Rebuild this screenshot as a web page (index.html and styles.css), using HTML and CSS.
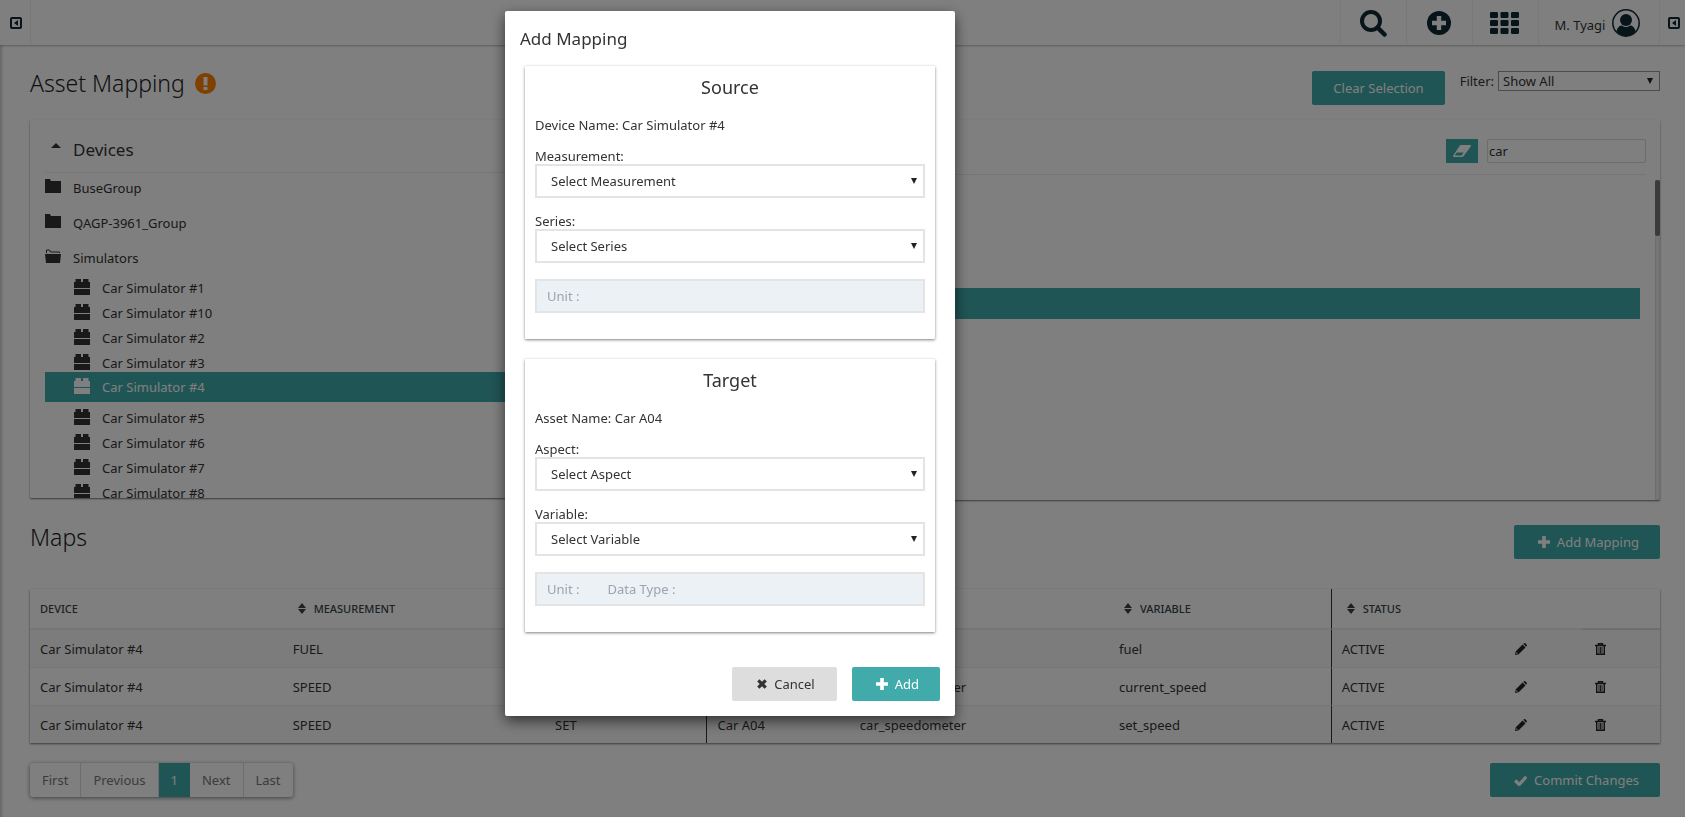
FILE: index.html
```html
<!DOCTYPE html>
<html lang="en">
<head>
<meta charset="utf-8">
<title>Asset Mapping</title>
<link rel="stylesheet" href="styles.css">
</head>
<body>
<svg class="defs" aria-hidden="true">
  <symbol id="collapse" viewBox="0 0 12 12"><rect x="1" y="1" width="10" height="10" rx="1" fill="none" stroke="currentColor" stroke-width="2"/><path d="M8 3v6L4 6z" fill="currentColor"/></symbol>
  <symbol id="folder" viewBox="0 0 16 14"><path d="M0 0h5l1 2h10v12H0z" fill="currentColor"/></symbol>
  <symbol id="folder-open" viewBox="0 0 16 14"><path d="M1.500 4V1h3l1 2h9v1" fill="none" stroke="currentColor"/><path d="M0 5h16l-1 9H1z" fill="currentColor"/></symbol>
  <symbol id="brick" viewBox="0 0 16 16"><path d="M0 9V3h1.500V0H7v3h2V0h5.500v3H16v6zM0 10h16v6H0z" fill="currentColor"/></symbol>
  <symbol id="sort" viewBox="0 0 8 11"><path d="M0 5l4-5 4 5zM0 6h8l-4 5z" fill="currentColor"/></symbol>
  <symbol id="plus" viewBox="0 0 12 12"><path d="M4.200 0h3.600v4.200H12v3.600H7.800V12H4.200V7.800H0V4.200h4.200z" fill="currentColor"/></symbol>
  <symbol id="check" viewBox="0 0 13 11"><path d="M1.200 5.500l4 4 7-7.700" fill="none" stroke="currentColor" stroke-width="3.200"/></symbol>
  <symbol id="cross" viewBox="0 0 10 10"><path d="M1.300 1.300l7.400 7.400M8.700 1.300L1.300 8.700" stroke="currentColor" stroke-width="3.200"/></symbol>
  <symbol id="pencil" viewBox="0 0 12 12"><path fill-rule="evenodd" d="M0 12l.8-3.700L7.600 1.500l2.900 2.900-6.800 6.800zM1.600 9.100l-.4 1.700 1.700-.4zM8.300.8L9.100.2Q9.700-.2 10.300.3l1.400 1.400q.5.600 0 1.200l-.7.800z" fill="currentColor"/></symbol>
  <symbol id="trash" viewBox="0 0 11 12"><path d="M3.500 2V.7h4V2M0 2.500h11M1.700 3v8.300h7.600V3" fill="none" stroke="currentColor" stroke-width="1.400"/><path d="M4 4v6.500M5.500 4v6.500M7 4v6.500" stroke="currentColor" stroke-width=".9"/></symbol>
</svg>

<header class="topbar">
  <button class="bar-cell bar-edge" aria-label="Expand left panel"><svg width="12" height="12"><use href="#collapse"/></svg></button>
  <span class="bar-space"></span>
  <button class="bar-cell bar-tool" aria-label="Search"><svg width="28" height="28" viewBox="0 0 28 28"><circle cx="12" cy="12" r="9" fill="none" stroke="currentColor" stroke-width="4"/><path d="M18.500 18.500l7 7" stroke="currentColor" stroke-width="4.500" stroke-linecap="round"/></svg></button>
  <button class="bar-cell bar-tool" aria-label="Add"><svg width="24" height="24" viewBox="0 0 24 24"><circle cx="12" cy="12" r="12" fill="currentColor"/><path d="M12 5v14M5 12h14" stroke="#fff" stroke-width="4.400"/></svg></button>
  <button class="bar-cell bar-tool" aria-label="Apps"><svg width="29" height="22" viewBox="0 0 29 22" fill="currentColor"><rect width="8" height="6" rx="1.200"/><rect x="10.500" width="8" height="6" rx="1.200"/><rect x="21" width="8" height="6" rx="1.200"/><rect y="8" width="8" height="6" rx="1.200"/><rect x="10.500" y="8" width="8" height="6" rx="1.200"/><rect x="21" y="8" width="8" height="6" rx="1.200"/><rect y="16" width="8" height="6" rx="1.200"/><rect x="10.500" y="16" width="8" height="6" rx="1.200"/><rect x="21" y="16" width="8" height="6" rx="1.200"/></svg></button>
  <button class="bar-cell bar-user"><span class="user-name">M. Tyagi</span><svg width="28" height="28" viewBox="0 0 28 28"><circle cx="14" cy="14" r="13.200" fill="none" stroke="currentColor" stroke-width="1.500"/><circle cx="14" cy="11" r="6" fill="currentColor"/><path d="M4.500 22Q6 16.500 10 16.500q4 3 8 0 4 0 5.500 5.500Q20 27 14 27T4.500 22z" fill="currentColor"/></svg></button>
  <button class="bar-cell bar-edge" aria-label="Expand right panel"><svg width="12" height="12"><use href="#collapse"/></svg></button>
</header>

<main class="page">
  <div class="page-head">
    <h1 class="heading">Asset Mapping</h1>
    <svg class="warn" width="21" height="21" viewBox="0 0 21 21"><circle cx="10.500" cy="10.500" r="10.500" fill="#ff8000"/><path d="M8.500 4h4v8.500h-4zM8.500 14h4v3h-4z" fill="#fff"/></svg>
    <span class="push"></span>
    <button class="btn">Clear Selection</button>
    <label class="filter">Filter:<span class="pick pick-small"><select><option>Show All</option></select></span></label>
  </div>

  <div class="panels">
    <section class="panel devices">
      <h2 class="panel-title"><svg width="10" height="5" viewBox="0 0 10 5"><path d="M0 5l5-5 5 5z" fill="currentColor"/></svg>Devices</h2>
      <ul class="tree">
        <li class="group"><svg width="16" height="14"><use href="#folder"/></svg>BuseGroup</li>
        <li class="group"><svg width="16" height="14"><use href="#folder"/></svg>QAGP-3961_Group</li>
        <li class="group"><svg width="16" height="14"><use href="#folder-open"/></svg>Simulators</li>
        <li class="leaf"><svg width="16" height="16"><use href="#brick"/></svg>Car Simulator #1</li>
        <li class="leaf"><svg width="16" height="16"><use href="#brick"/></svg>Car Simulator #10</li>
        <li class="leaf"><svg width="16" height="16"><use href="#brick"/></svg>Car Simulator #2</li>
        <li class="leaf"><svg width="16" height="16"><use href="#brick"/></svg>Car Simulator #3</li>
        <li class="leaf selected"><svg width="16" height="16"><use href="#brick"/></svg>Car Simulator #4</li>
        <li class="leaf"><svg width="16" height="16"><use href="#brick"/></svg>Car Simulator #5</li>
        <li class="leaf"><svg width="16" height="16"><use href="#brick"/></svg>Car Simulator #6</li>
        <li class="leaf"><svg width="16" height="16"><use href="#brick"/></svg>Car Simulator #7</li>
        <li class="leaf"><svg width="16" height="16"><use href="#brick"/></svg>Car Simulator #8</li>
      </ul>
    </section>
    <section class="panel assets">
      <div class="asset-tools">
        <button class="erase" aria-label="Clear search"><svg width="18" height="12" viewBox="0 0 18 12"><path fill-rule="evenodd" d="M8 0h9q1.500.3.700 1.500l-7 9.500q-.7 1-1.700 1H1Q-.5 11.700.3 10.500L6.500 1Q7 0 8 0zM3.800 7.500l-2 3h6.700l2.200-3z" fill="currentColor"/></svg></button>
        <input class="search" type="text" value="car" aria-label="Search assets">
      </div>
      <div class="asset-list"><div class="asset-selected"></div><span class="track"><span class="thumb"></span></span></div>
    </section>
  </div>

  <div class="maps-head">
    <h1 class="heading">Maps</h1>
    <button class="btn"><svg width="12" height="12"><use href="#plus"/></svg>Add Mapping</button>
  </div>

  <table class="maps">
    <colgroup><col class="c-device"><col class="c-measure"><col class="c-series"><col class="c-asset"><col class="c-aspect"><col class="c-variable"><col class="c-status"><col class="c-edit"><col class="c-delete"></colgroup>
    <thead>
      <tr><th>DEVICE</th><th><svg width="8" height="11"><use href="#sort"/></svg>MEASUREMENT</th><th><svg width="8" height="11"><use href="#sort"/></svg>SERIES</th><th class="split"><svg width="8" height="11"><use href="#sort"/></svg>ASSET</th><th><svg width="8" height="11"><use href="#sort"/></svg>ASPECT TYPE</th><th><svg width="8" height="11"><use href="#sort"/></svg>VARIABLE</th><th class="split"><svg width="8" height="11"><use href="#sort"/></svg>STATUS</th><th></th><th class="last"></th></tr>
    </thead>
    <tbody>
      <tr><td>Car Simulator #4</td><td>FUEL</td><td>LEVEL</td><td class="split">Car A04</td><td>car_fuel</td><td>fuel</td><td class="split">ACTIVE</td><td><button class="act" aria-label="Edit"><svg width="12" height="12"><use href="#pencil"/></svg></button></td><td><button class="act act-del" aria-label="Delete"><svg width="11" height="12"><use href="#trash"/></svg></button></td></tr>
      <tr><td>Car Simulator #4</td><td>SPEED</td><td>CURRENT</td><td class="split">Car A04</td><td>car_speedometer</td><td>current_speed</td><td class="split">ACTIVE</td><td><button class="act" aria-label="Edit"><svg width="12" height="12"><use href="#pencil"/></svg></button></td><td><button class="act act-del" aria-label="Delete"><svg width="11" height="12"><use href="#trash"/></svg></button></td></tr>
      <tr><td>Car Simulator #4</td><td>SPEED</td><td>SET</td><td class="split">Car A04</td><td>car_speedometer</td><td>set_speed</td><td class="split">ACTIVE</td><td><button class="act" aria-label="Edit"><svg width="12" height="12"><use href="#pencil"/></svg></button></td><td><button class="act act-del" aria-label="Delete"><svg width="11" height="12"><use href="#trash"/></svg></button></td></tr>
    </tbody>
  </table>

  <div class="page-foot">
    <nav class="pager"><button>First</button><button>Previous</button><button class="current">1</button><button>Next</button><button>Last</button></nav>
    <button class="btn"><svg width="13" height="11"><use href="#check"/></svg>Commit Changes</button>
  </div>
</main>

<div class="overlay">
  <div class="modal" role="dialog" aria-labelledby="modal-title">
    <h2 class="modal-title" id="modal-title">Add Mapping</h2>
    <section class="card">
      <h3 class="card-title">Source</h3>
      <p class="card-name">Device Name: Car Simulator #4</p>
      <label class="field">Measurement:<span class="pick"><select><option>Select Measurement</option></select></span></label>
      <label class="field">Series:<span class="pick"><select><option>Select Series</option></select></span></label>
      <div class="info"><span>Unit :</span></div>
    </section>
    <section class="card">
      <h3 class="card-title">Target</h3>
      <p class="card-name">Asset Name: Car A04</p>
      <label class="field">Aspect:<span class="pick"><select><option>Select Aspect</option></select></span></label>
      <label class="field">Variable:<span class="pick"><select><option>Select Variable</option></select></span></label>
      <div class="info"><span>Unit :</span><span>Data Type :</span></div>
    </section>
    <div class="modal-foot">
      <button class="btn btn-plain"><svg width="10" height="10"><use href="#cross"/></svg>Cancel</button>
      <button class="btn"><svg width="12" height="12"><use href="#plus"/></svg>Add</button>
    </div>
  </div>
</div>
</body>
</html>
```

FILE: styles.css
```css
* { box-sizing: border-box; }
body {
  margin: 0;
  background: #fff;
  color: #333;
  font: 13px/20px "Noto Sans", "Open Sans", sans-serif;
  overflow: hidden;
}
h1, h2, h3, p, ul { margin: 0; padding: 0; font-weight: 400; }
button, input, select { font: inherit; color: inherit; }
button { border: 0; padding: 0; background: none; }
svg { display: block; flex: none; }
.defs { position: absolute; width: 0; height: 0; }

.topbar {
  display: flex;
  height: 45px;
  color: #0f2833;
  box-shadow: 0 1px 2px rgba(0, 0, 0, .25);
}
.bar-cell {
  display: flex;
  align-items: center;
  justify-content: center;
  border-left: 1px solid #f0f0f0;
}
.bar-edge { width: 31px; padding-left: 2px; }
.bar-edge:first-child { border-left: 0; border-right: 1px solid #f0f0f0; }
.bar-edge:last-child { width: 26px; }
.bar-tool { width: 66px; padding-right: 2px; }
.bar-user { width: 121px; gap: 7px; padding-right: 3px; }
.user-name { color: #333; padding-top: 5px; }
.bar-space { flex: 1; }

.page {
  padding: 26px 25px 20px 30px;
  box-shadow: inset 3px 0 3px -1px rgba(0, 0, 0, .2);
}
.page-head { display: flex; align-items: flex-start; height: 49px; }
.heading { font-size: 23px; line-height: 24px; font-weight: 300; color: #222; }
.warn { margin: 2px 0 0 10px; }
.push { flex: 1; }
.btn {
  display: flex;
  align-items: center;
  gap: 7px;
  height: 34px;
  padding: 0 21px;
  border-radius: 2px;
  background: #41aaaa;
  color: #fff;
}
.btn svg { margin-left: 3px; }
.btn-plain { padding: 0 22px; background: #ddd; color: #333; }
.filter { display: flex; gap: 4px; margin-left: 15px; }

.pick { display: block; position: relative; }
.pick select {
  display: block;
  width: 100%;
  height: 34px;
  padding: 0 24px 0 14px;
  border: 2px solid #e4e4e4;
  border-radius: 0;
  background: #fff;
  appearance: none;
}
.pick::after {
  content: "";
  position: absolute;
  top: 14px;
  right: 8px;
  width: 6px;
  height: 6px;
  background: #222;
  clip-path: polygon(0 0, 100% 0, 50% 100%);
}
.pick-small { width: 162px; }
.pick-small select { height: 20px; padding: 0 20px 0 4px; border: 1px solid #999; line-height: 18px; }
.pick-small::after { top: 7px; right: 7px; }

.panels { display: grid; grid-template-columns: 1fr 1fr; align-items: start; gap: 15px; }
.panel { border-radius: 1px; box-shadow: 0 1px 2px rgba(0, 0, 0, .55); overflow: hidden; }
.devices { height: 378px; padding: 0 15px; }
.panel-title {
  display: flex;
  align-items: center;
  gap: 12px;
  height: 53px;
  padding: 7px 0 0 6px;
  border-bottom: 1px solid #ececec;
  font-size: 17px;
}
.panel-title svg { margin-bottom: 8px; }
.tree { list-style: none; }
.group { display: flex; align-items: center; gap: 12px; height: 35px; padding-bottom: 6px; }
.group svg { margin-bottom: 3px; }
.leaf { display: flex; align-items: center; gap: 12px; height: 25px; padding-left: 29px; }
.leaf svg { margin-bottom: 2px; }
.group + .leaf { margin-top: -3px; }
.selected { height: 30px; margin: -3px 0 3px; background: #41aaaa; color: #fff; }
.assets { height: 380px; }
.asset-tools {
  display: flex;
  align-items: center;
  justify-content: flex-end;
  gap: 9px;
  height: 55px;
  margin: 0 14px 0 15px;
  padding-top: 7px;
  border-bottom: 1px solid #ececec;
}
.erase { display: grid; place-items: center; width: 32px; height: 24px; background: #41aaaa; color: #fff; }
.search { width: 159px; height: 24px; padding: 0 1px; border: 1px solid #d8d8d8; border-radius: 2px; }
.asset-list { display: flex; height: 325px; padding-top: 5px; }
.asset-selected { flex: 1; height: 31px; margin: 108px 15px 0; background: #41aaaa; }
.track { width: 5px; border: 1px solid #ddd; border-width: 0 1px 1px; background: #ececec; }
.thumb { display: block; height: 56px; margin: 0 -1px; border-radius: 2px; background: #777; }

.maps-head { display: flex; justify-content: space-between; height: 64px; margin-top: 25px; }

.maps {
  width: 100%;
  table-layout: fixed;
  border-collapse: separate;
  border-spacing: 0;
  box-shadow: 0 1px 2px rgba(0, 0, 0, .55);
}
.c-device { width: 15.500%; }
.c-measure { width: 16.100%; }
.c-series { width: 9.900%; }
.c-asset { width: 8.800%; }
.c-aspect { width: 15.900%; }
.c-variable { width: 13.600%; }
.c-status { width: 10.700%; }
.c-edit { width: 4.700%; }
.c-delete { width: 4.800%; }
.maps th {
  height: 41px;
  padding: 0 10px;
  border-bottom: 2px solid #ececec;
  color: #37444a;
  font-size: 11px;
  font-weight: 500;
  text-align: left;
}
.maps th svg { display: inline-block; margin: 0 8px 0 5px; vertical-align: -1px; }
.maps .last { border-bottom-color: #ddd; }
.maps td { height: 38px; padding: 0 10px; border-bottom: 1px solid #ececec; }
.maps tbody tr:last-child td { height: 37px; border-bottom: 0; }
.maps tbody tr:nth-child(odd) { background: #f9f9f9; }
.maps .split { border-left: 1px solid #333; }
.act { display: block; color: #222; }
.act-del { margin-left: 3px; }

.page-foot { display: flex; justify-content: space-between; margin-top: 20px; }
.pager { display: flex; height: 34px; border-radius: 3px; color: #777; box-shadow: 0 1px 4px rgba(0, 0, 0, .5); }
.pager button { padding: 0 12px; border-right: 1px solid #ddd; }
.pager .current { border: 0; background: #41aaaa; color: #fff; }
.pager button:last-child { border: 0; }

.overlay {
  position: fixed;
  inset: 0;
  display: flex;
  align-items: flex-start;
  justify-content: center;
  padding: 11px 225px 0 0;
  background: rgba(0, 0, 0, .5);
}
.modal {
  width: 450px;
  padding: 17px 15px 15px;
  border-radius: 2px;
  background: #fff;
  box-shadow: 0 5px 14px rgba(0, 0, 0, .6);
}
.modal-title { font-size: 17px; line-height: 22px; margin-bottom: 16px; }
.card {
  height: 273px;
  margin: 0 5px 20px;
  padding: 9px 10px 0;
  border-radius: 1px;
  box-shadow: 0 1px 3px rgba(0, 0, 0, .5);
}
.card-title { font-size: 18px; line-height: 24px; text-align: center; }
.card-name { margin: 16px 0 14px; }
.field { display: block; line-height: 15px; margin-bottom: 16px; }
.info {
  display: flex;
  align-items: center;
  gap: 28px;
  height: 34px;
  padding: 0 10px;
  border: 2px solid #e4e4e4;
  background: #ebf1f4;
  color: #9aa5b1;
}
.modal-foot { display: flex; justify-content: flex-end; gap: 15px; padding-top: 15px; }
```
